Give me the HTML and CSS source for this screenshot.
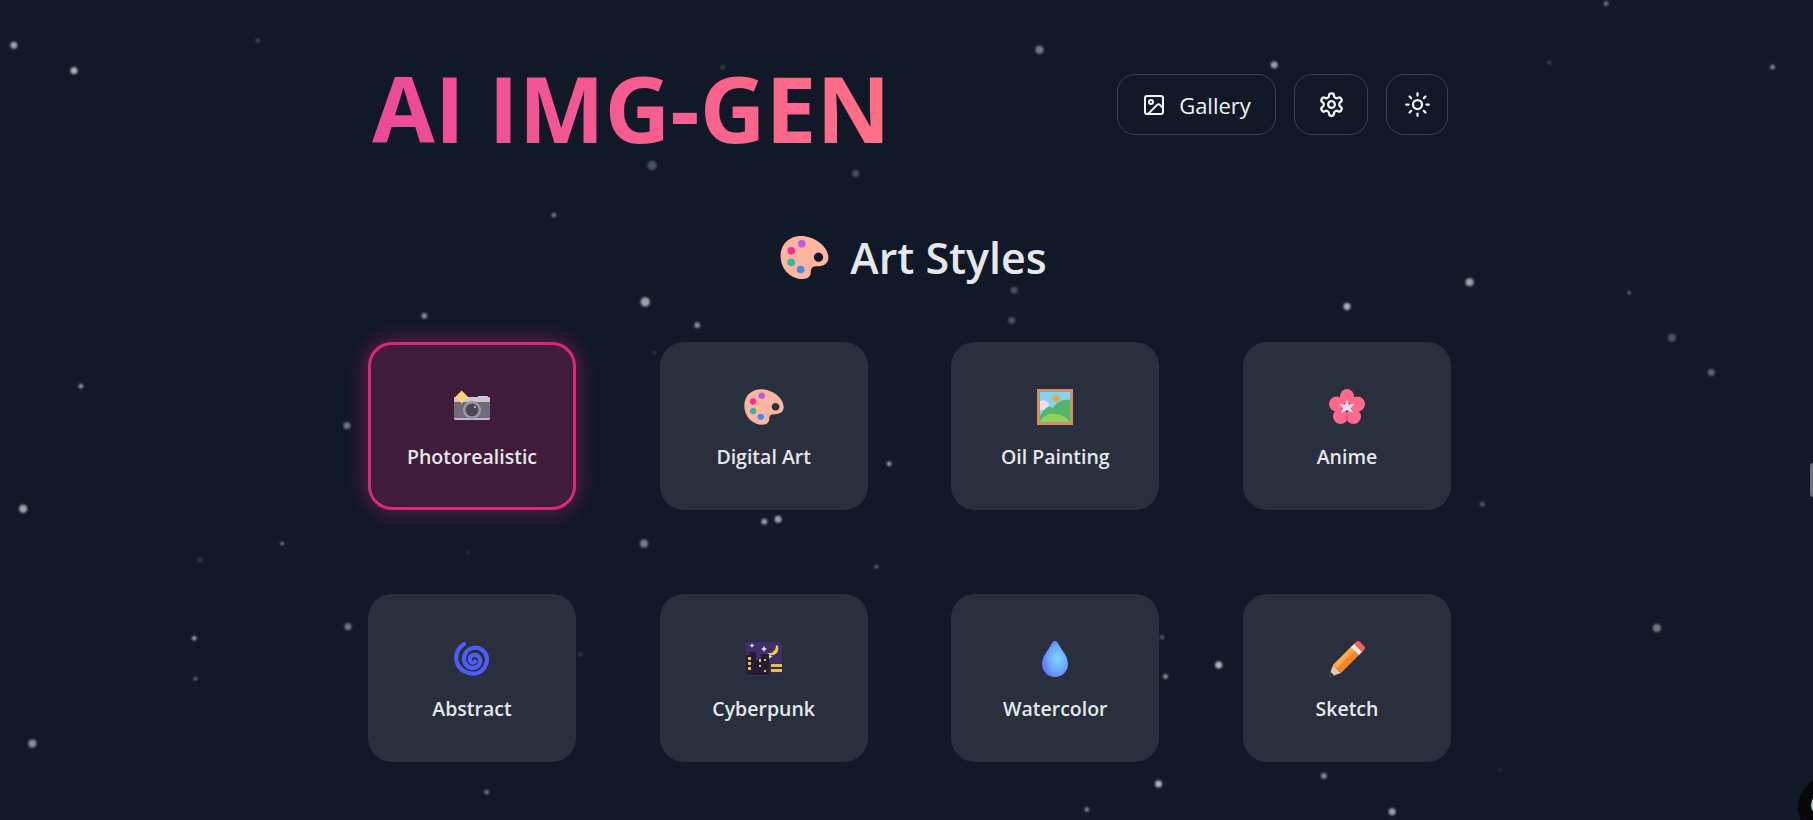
FILE: index.html
```html
<!DOCTYPE html>
<html lang="en">
<head>
    <meta charset="UTF-8">
    <title>AI IMG-GEN</title>
    <link rel="stylesheet" href="styles.css">
</head>
<body>
    <!-- hidden sprite for the emoji style icons -->
    <svg class="sprite" aria-hidden="true">
        <symbol id="palette" viewBox="0 0 32 32">
            <path fill="#fdb5a0" fill-rule="evenodd" d="M14 2.500C22 2.500 31 9 31 16C31 20 28 21.500 24 21.500C21 21.500 20 22.500 20 25C20 28 18 29.500 15 29.500C7 29.500 1 23 1 15C1 7 7 2.500 14 2.500ZM24.800 12.900a2.900 2.900 0 1 0 .01 0Z"/>
            <circle cx="7.700" cy="11.800" r="2.400" fill="#f0318f"/>
            <circle cx="14.300" cy="7.400" r="2.400" fill="#b35de8"/>
            <circle cx="7.700" cy="19.100" r="2.400" fill="#2fb8a8"/>
            <circle cx="13.600" cy="23.500" r="2.400" fill="#3f8cf5"/>
        </symbol>
    </svg>

    <!-- background stars, coords are in the 1568 wide space -->
    <svg class="stars" viewBox="0 0 1568 709" aria-hidden="true">
        <g fill="#d9dce2">
            <circle cx="12" cy="39" r="3" opacity=".7"/>
            <circle cx="64" cy="61" r="3" opacity=".8"/>
            <circle cx="223" cy="35" r="2" opacity=".25"/>
            <circle cx="899" cy="43" r="3.500" opacity=".5"/>
            <circle cx="1102" cy="56" r="3" opacity=".7"/>
            <circle cx="1389" cy="3" r="2" opacity=".5"/>
            <circle cx="1533" cy="58" r="2" opacity=".6"/>
            <circle cx="1340" cy="54" r="1.500" opacity=".3"/>
            <circle cx="625" cy="58" r="2" opacity=".2"/>
            <circle cx="564" cy="143" r="4" opacity=".3"/>
            <circle cx="740" cy="150" r="3" opacity=".3"/>
            <circle cx="479" cy="186" r="2" opacity=".5"/>
            <circle cx="877" cy="251" r="3" opacity=".3"/>
            <circle cx="1271" cy="244" r="3.500" opacity=".7"/>
            <circle cx="1409" cy="253" r="1.500" opacity=".5"/>
            <circle cx="1165" cy="265" r="3" opacity=".8"/>
            <circle cx="558" cy="261" r="4" opacity=".7"/>
            <circle cx="367" cy="273" r="2.500" opacity=".6"/>
            <circle cx="603" cy="281" r="2.500" opacity=".6"/>
            <circle cx="875" cy="277" r="3" opacity=".3"/>
            <circle cx="1446" cy="292" r="3.500" opacity=".3"/>
            <circle cx="566" cy="305" r="1" opacity=".4"/>
            <circle cx="1480" cy="322" r="3" opacity=".4"/>
            <circle cx="70" cy="334" r="2" opacity=".7"/>
            <circle cx="300" cy="368" r="3" opacity=".5"/>
            <circle cx="769" cy="401" r="2" opacity=".7"/>
            <circle cx="20" cy="440" r="3.500" opacity=".7"/>
            <circle cx="1282" cy="436" r="2" opacity=".4"/>
            <circle cx="661" cy="451" r="2.500" opacity=".7"/>
            <circle cx="673" cy="449" r="3" opacity=".7"/>
            <circle cx="557" cy="470" r="3.500" opacity=".5"/>
            <circle cx="244" cy="470" r="1.500" opacity=".6"/>
            <circle cx="173" cy="484" r="2" opacity=".2"/>
            <circle cx="405" cy="478" r="1.500" opacity=".15"/>
            <circle cx="758" cy="490" r="1.500" opacity=".5"/>
            <circle cx="301" cy="542" r="3" opacity=".5"/>
            <circle cx="168" cy="552" r="2" opacity=".7"/>
            <circle cx="1433" cy="543" r="3.500" opacity=".5"/>
            <circle cx="1005" cy="551" r="2" opacity=".3"/>
            <circle cx="502" cy="566" r="2" opacity=".15"/>
            <circle cx="1054" cy="575" r="3" opacity=".8"/>
            <circle cx="1008" cy="585" r="2" opacity=".7"/>
            <circle cx="169" cy="587" r="1.500" opacity=".5"/>
            <circle cx="28" cy="643" r="3.500" opacity=".6"/>
            <circle cx="421" cy="685" r="2" opacity=".5"/>
            <circle cx="1002" cy="678" r="3" opacity=".8"/>
            <circle cx="1145" cy="671" r="2.500" opacity=".6"/>
            <circle cx="1297" cy="666" r="1" opacity=".3"/>
            <circle cx="940" cy="700" r="2" opacity=".6"/>
            <circle cx="1204" cy="702" r="3" opacity=".7"/>
            <circle cx="712" cy="650" r="2" opacity=".1"/>
        </g>
    </svg>

    <div class="page">
        <header class="top-bar">
            <h1 class="logo">AI IMG-GEN</h1>
            <div class="top-actions">
                <button class="top-btn gallery-btn">
                    <svg class="line-icon image-icon" viewBox="0 0 24 24"><rect x="3" y="3" width="18" height="18" rx="2"/><circle cx="9" cy="9" r="2"/><path d="m21 15-3.090-3.090a2 2 0 0 0-2.820 0L6 21"/></svg>
                    Gallery
                </button>
                <button class="top-btn settings-btn">
                    <svg class="line-icon" viewBox="0 0 24 24"><path d="M12.220 2h-.44a2 2 0 0 0-2 2v.18a2 2 0 0 1-1 1.730l-.43.25a2 2 0 0 1-2 0l-.15-.08a2 2 0 0 0-2.730.73l-.22.38a2 2 0 0 0 .73 2.730l.15.1a2 2 0 0 1 1 1.720v.51a2 2 0 0 1-1 1.740l-.15.09a2 2 0 0 0-.73 2.730l.22.38a2 2 0 0 0 2.730.73l.15-.08a2 2 0 0 1 2 0l.43.25a2 2 0 0 1 1 1.730V20a2 2 0 0 0 2 2h.44a2 2 0 0 0 2-2v-.18a2 2 0 0 1 1-1.730l.43-.25a2 2 0 0 1 2 0l.15.08a2 2 0 0 0 2.730-.73l.22-.39a2 2 0 0 0-.73-2.730l-.15-.08a2 2 0 0 1-1-1.740v-.5a2 2 0 0 1 1-1.740l.15-.09a2 2 0 0 0 .73-2.730l-.22-.38a2 2 0 0 0-2.730-.73l-.15.08a2 2 0 0 1-2 0l-.43-.25a2 2 0 0 1-1-1.730V4a2 2 0 0 0-2-2z"/><circle cx="12" cy="12" r="3"/></svg>
                </button>
                <button class="top-btn theme-btn">
                    <svg class="line-icon" viewBox="0 0 24 24"><circle cx="12" cy="12" r="4"/><path d="M12 2v2M12 20v2M4.930 4.930l1.410 1.410M17.660 17.660l1.410 1.410M2 12h2M20 12h2M6.340 17.660l-1.410 1.410M19.070 4.930l-1.410 1.410"/></svg>
                </button>
            </div>
        </header>

        <h2 class="section-title">
            <svg class="section-emoji"><use href="#palette"/></svg>
            Art Styles
        </h2>

        <div class="style-grid">
            <div class="style-card selected">
                <svg class="emoji" viewBox="0 0 36 36">
                    <path fill="#d8d2e0" d="M24 7h9a1 1 0 0 1 1 1H24z"/>
                    <rect y="8" width="36" height="6" rx="1" fill="#cbc5d3"/>
                    <rect y="13" width="36" height="17" fill="#6f6d78"/>
                    <path fill="#bdb5d0" d="M0 29h36v1a2 2 0 0 1-2 1H2a2 2 0 0 1-2-1z"/>
                    <circle cx="18" cy="21" r="9" fill="#9b98a2"/>
                    <circle cx="18" cy="21" r="6.500" fill="#4d4659"/>
                    <circle cx="21" cy="18" r="1" fill="#cfcad6"/>
                    <path fill="#f6d872" d="M7.700 1.500l6.500 6.500-6.500 6.500L1.200 8z"/>
                </svg>
                <span class="style-name">Photorealistic</span>
            </div>
            <div class="style-card">
                <svg class="emoji palette-emoji"><use href="#palette"/></svg>
                <span class="style-name">Digital Art</span>
            </div>
            <div class="style-card">
                <svg class="emoji" viewBox="0 0 36 36">
                    <rect width="36" height="36" fill="#cf9065"/>
                    <rect x="3" y="3" width="30" height="30" fill="#82d3f5"/>
                    <path fill="#ecdff2" d="M3 12c4-2 7 0 9 3l-2 6H3z"/>
                    <path fill="#52b56a" d="M3 27c5-9 9-11 13-8 4-6 9-9 17-8v22H3z"/>
                    <path fill="#8fd35f" d="M3 33c3-7 10-9 15-8 6 0 12 3 15 8z"/>
                    <circle cx="19" cy="9.500" r="3.600" fill="#f5a623"/>
                </svg>
                <span class="style-name">Oil Painting</span>
            </div>
            <div class="style-card">
                <svg class="emoji" viewBox="0 0 36 36">
                    <g fill="#fd6a8a">
                        <ellipse cx="18" cy="7.500" rx="7" ry="7.500"/>
                        <circle cx="28.500" cy="15" r="7.500"/>
                        <circle cx="24.500" cy="27.500" r="7.500"/>
                        <circle cx="11.500" cy="27.500" r="7.500"/>
                        <circle cx="7.500" cy="15" r="7.500"/>
                    </g>
                    <path fill="#e8407f" d="M18 34c-1-3-1-6 0-10 1 4 1 7 0 10z"/>
                    <path fill="#f8d5f2" d="M18 10.500l2 5 5.500-.5-3.500 4 2 5-6-2.800-6 2.800 2-5-3.500-4 5.500.5z"/>
                </svg>
                <span class="style-name">Anime</span>
            </div>
            <div class="style-card">
                <svg class="emoji" viewBox="0 0 36 36">
                    <path fill="none" stroke="#4f5cf8" stroke-width="4.200" stroke-linecap="round" d="M10 3C4 7 1.500 13 2.500 20c2 9 11 13.500 19.500 12.500 7.500-2 11.500-8.500 11-15.500-1.500-8-8.500-11.500-14.500-10C12 8.500 8.500 15.500 10.500 21c2 5.500 8.500 7.500 13 4.500 4-3.500 3.500-10-1.500-11.500-4-1-7 2-6 5.500 .7 2.500 3.500 3 5 1"/>
                </svg>
                <span class="style-name">Abstract</span>
            </div>
            <div class="style-card">
                <svg class="emoji" viewBox="0 0 36 36">
                    <rect width="36" height="34" y="1" rx="3" fill="#3f2e69"/>
                    <path fill="#f5c84c" d="M30 4c0 6-4 9-9 8 5 5 13 1 11-7z"/>
                    <g fill="#e8e2f5">
                        <path d="M18 5l1 2 2 1-2 1-1 2-1-2-2-1 2-1z"/>
                        <path d="M6 2l.8 1.700 1.700.8-1.700.8L6 7l-.8-1.700-1.700-.8 1.700-.8z"/>
                        <path d="M24 13l.8 1.700 1.700.8-1.700.8L24 18l-.8-1.700-1.700-.8 1.700-.8z"/>
                    </g>
                    <path fill="#241c33" d="M0 14h3v-3h7v8h5v-6h8v21H3a3 3 0 0 1-3-3z"/>
                    <path fill="#352c45" d="M23 22h13v10a3 3 0 0 1-3 3H23z"/>
                    <g fill="#e9bd4a">
                        <rect x="2" y="16" width="3" height="3"/>
                        <rect x="2" y="21" width="3" height="3"/>
                        <rect x="2" y="26" width="3" height="3"/>
                        <rect x="13" y="18" width="2" height="3"/>
                        <rect x="18" y="18" width="2" height="2"/>
                        <rect x="13" y="24" width="2" height="2"/>
                        <rect x="18" y="29" width="2" height="2"/>
                        <rect x="25" y="23" width="11" height="3"/>
                        <rect x="25" y="28" width="11" height="3"/>
                    </g>
                </svg>
                <span class="style-name">Cyberpunk</span>
            </div>
            <div class="style-card">
                <svg class="emoji" viewBox="0 0 36 36">
                    <defs>
                        <radialGradient id="dropFill" cx=".6" cy=".5" r=".6">
                            <stop offset="0" stop-color="#7fd6ff"/>
                            <stop offset=".6" stop-color="#6aa8ff"/>
                            <stop offset="1" stop-color="#6a6cff"/>
                        </radialGradient>
                    </defs>
                    <path fill="url(#dropFill)" d="M18 0c1.500 0 2.500 1 3.500 3C25 10 31 15 31 23a13 13 0 0 1-26 0C5 15 11 10 14.500 3 15.500 1 16.500 0 18 0z"/>
                </svg>
                <span class="style-name">Watercolor</span>
            </div>
            <div class="style-card">
                <svg class="emoji" viewBox="0 0 36 36">
                    <path fill="#e9c8a0" d="M4 24l8 8-10 3.500a1.200 1.200 0 0 1-1.500-1.500z"/>
                    <path fill="#3a1f3d" d="M1.700 31l3.300 3.300-3 1.100a1.200 1.200 0 0 1-1.500-1.500z"/>
                    <path fill="#f5842c" d="M4 24L23 5l8 8-19 19z"/>
                    <path fill="#ffa94d" d="M4 24L23 5l3.500 3.500L7.500 27.500z"/>
                    <path fill="#ece7ee" d="M22 6l4-4 8 8-4 4z"/>
                    <path fill="#f8604f" d="M25 3l2-2a2.800 2.800 0 0 1 4 0l4 4a2.800 2.800 0 0 1 0 4l-2 2z"/>
                </svg>
                <span class="style-name">Sketch</span>
            </div>
        </div>
    </div>

    <div class="edge-tab"></div>
    <div class="corner-badge"></div>
</body>
</html>
```

FILE: styles.css
```css
* {
    box-sizing: border-box;
}
html, body {
    height: 100%;
}
body {
    margin: 0;
    overflow: hidden;
    background: #111827;
    color: #e5e7eb;
    font-family: "Open Sans", "Noto Sans", Arial, sans-serif;
}
.sprite {
    position: absolute;
    width: 0;
    height: 0;
}
.stars {
    position: absolute;
    top: 0;
    left: 0;
    width: 1813px;
    height: 820px;
    filter: blur(0.8px);
}
.page {
    position: relative;
    width: 1083px;
    margin-left: 368px;
    padding-top: 74px;
}
.top-bar {
    display: flex;
    justify-content: space-between;
    align-items: flex-start;
    padding: 0 3px 0 4px;
    height: 152px;
}
.logo {
    margin: -21px 0 0 0;
    font-size: 91px;
    line-height: 110px;
    font-weight: 700;
    background: linear-gradient(90deg, #ec4899, #ff7085);
    -webkit-background-clip: text;
    background-clip: text;
    color: transparent;
}
.top-actions {
    display: flex;
    gap: 18px;
}
.top-btn {
    display: flex;
    align-items: center;
    justify-content: center;
    height: 61px;
    border: 1px solid #374151;
    border-radius: 18px;
    background: transparent;
    color: #f3f4f6;
    font-family: inherit;
    font-size: 22px;
}
.gallery-btn {
    width: 159px;
    gap: 13px;
}
.settings-btn {
    width: 74px;
}
.theme-btn {
    width: 62px;
}
.line-icon {
    width: 27px;
    height: 27px;
    fill: none;
    stroke: currentColor;
    stroke-width: 2;
    stroke-linecap: round;
    stroke-linejoin: round;
}
.image-icon {
    width: 24px;
    height: 24px;
}
.section-title {
    display: flex;
    align-items: center;
    justify-content: center;
    gap: 20px;
    margin: 0 0 54px 0;
    padding-left: 7px;
    height: 62px;
    font-size: 43px;
    font-weight: 600;
    color: #e5e7eb;
}
.section-emoji {
    width: 51px;
    height: 51px;
}
.style-grid {
    display: grid;
    grid-template-columns: repeat(4, 208px);
    grid-auto-rows: 168px;
    gap: 84px 83.67px;
}
.style-card {
    display: flex;
    flex-direction: column;
    align-items: center;
    justify-content: center;
    gap: 18px;
    padding-top: 7px;
    border-radius: 24px;
    background: #292f3c;
}
.style-card.selected {
    background: #3e1c3a;
    border: 3px solid #db2777;
    box-shadow: 0 0 22px rgba(219, 39, 119, 0.5);
}
.emoji {
    width: 36px;
    height: 36px;
}
.palette-emoji {
    width: 42px;
    height: 42px;
    margin: -3px 0;
}
.style-name {
    font-size: 19.5px;
    font-weight: 600;
    color: #e5e7eb;
}
.edge-tab {
    position: absolute;
    top: 463px;
    right: 0;
    width: 3px;
    height: 34px;
    border-radius: 3px 0 0 3px;
    background: #6b7280;
}
.corner-badge {
    position: absolute;
    top: 777px;
    left: 1798px;
    width: 60px;
    height: 60px;
    border-radius: 50%;
    background: #08080a;
}
.corner-badge::after {
    content: "";
    position: absolute;
    top: 18px;
    left: 13px;
    width: 16px;
    height: 20px;
    border-radius: 50%;
    background: #9fd8cc;
}
```
